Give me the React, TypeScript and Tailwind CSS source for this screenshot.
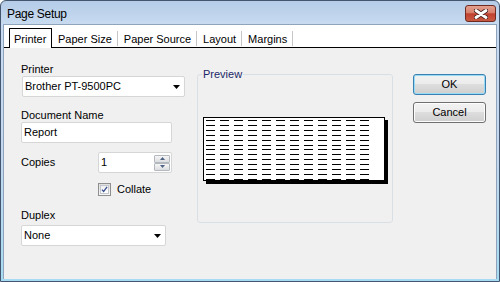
import React from "react";

const Arrow = () => (
  <svg width="7" height="4" viewBox="0 0 7 4" className="shrink-0">
    <path d="M0 0h7L3.5 4z" fill="#000" />
  </svg>
);

function ComboBox({ value, className }: { value: string; className: string }) {
  return (
    <div
      className={`h-[21px] bg-white border border-[#d6d6d6] rounded-[2px] flex items-center justify-between pl-[2px] pr-[4px] ${className}`}
    >
      <span>{value}</span>
      <Arrow />
    </div>
  );
}

function SpinArrow({ up }: { up: boolean }) {
  return (
    <div className="w-[16px] h-[8px] border border-[#b4b9c0] rounded-[1px] bg-[linear-gradient(to_bottom,#f6f6f6,#dcdde0)] flex items-center justify-center">
      <svg width="5" height="3" viewBox="0 0 5 3">
        <path d={up ? "M0 3h5L2.5 0z" : "M0 0h5L2.5 3z"} fill="#4d6284" />
      </svg>
    </div>
  );
}

function CloseButton() {
  return (
    <div className="self-start mt-[4px] w-[31px] h-[17px] rounded-[3px] border border-[#6f2a22] bg-[linear-gradient(to_bottom,#e3a08f_0%,#d7806c_45%,#c2402f_52%,#c85a42_100%)] flex items-center justify-center">
      <svg width="14" height="10" viewBox="0 0 14 10">
        <path d="M2 1.5L12 8.5M12 1.5L2 8.5" stroke="#4a2420" strokeWidth="4.6" strokeLinecap="round" />
        <path d="M2 1.5L12 8.5M12 1.5L2 8.5" stroke="#ffffff" strokeWidth="2.8" strokeLinecap="round" />
      </svg>
    </div>
  );
}

const tabs = ["Paper Size", "Paper Source", "Layout", "Margins"];

const rows = Array.from({ length: 13 });
const cols = Array.from({ length: 12 });

export default function App() {
  return (
    <div className="w-[500px] h-[282px] flex flex-col border border-[#44566f] rounded-t-[6px] overflow-hidden bg-[linear-gradient(to_bottom,#b5cce7_0px,#c8dbf0_24px,#c3d8ee_55%,#a6dcf3_100%)] font-['Liberation_Sans',Arial,sans-serif] text-[11px] leading-[13px] text-black">
      {/* Title bar */}
      <div className="h-[23px] shrink-0 flex items-center justify-between pl-[6px] pr-[3px]">
        <span className="text-[12px] leading-[14px] mt-[2px] tracking-[-0.3px]">Page Setup</span>
        <CloseButton />
      </div>

      {/* Client area */}
      <div className="flex-1 mx-[2px] mb-[2px] border-x border-t border-[#8fa3bc] bg-[#f0f0f0] flex flex-col">
        {/* Tabs */}
        <div className="h-[23px] shrink-0 bg-white border-b border-black flex items-end pl-[5px]">
          <div className="relative -mb-px h-[20px] w-[43px] bg-white border-x border-t border-black pl-[4px] pt-[4px] rounded-tl-[1px]">
            Printer
          </div>
          {tabs.map((t) => (
            <div key={t} className="h-[15px] mb-px pt-[2px] pl-[6px] pr-[5px] border-r border-[#c6c6c6]">
              {t}
            </div>
          ))}
        </div>

        {/* Body */}
        <div className="flex items-start pl-[17px]">
          {/* Left column */}
          <div className="w-[164px] pt-[15px] flex flex-col">
            <span>Printer</span>
            <ComboBox value="Brother PT-9500PC" className="ml-px w-[163px]" />

            <span className="mt-[12px]">Document Name</span>
            <div className="h-[21px] w-[151px] bg-white border border-[#d6d6d6] rounded-[2px] flex items-center pl-[2px]">
              Report
            </div>

            <div className="mt-[9px] h-[21px] flex items-center">
              <span className="w-[77px]">Copies</span>
              <div className="h-[21px] w-[74px] bg-white border border-[#d6d6d6] rounded-[2px] flex items-center justify-between pl-[2px] pr-px">
                <span>1</span>
                <div className="flex flex-col">
                  <SpinArrow up />
                  <SpinArrow up={false} />
                </div>
              </div>
            </div>

            <div className="mt-[10px] flex items-center pl-[77px] gap-[6px]">
              <div className="w-[13px] h-[13px] border border-[#8e8f8f] bg-[linear-gradient(to_bottom,#dfdfdf,#f7f7f7)] p-px">
                <div className="w-full h-full border border-[#c2c7ce] bg-[linear-gradient(to_bottom,#f0f0f0,#ffffff)] flex items-center justify-center">
                  <svg width="9" height="9" viewBox="0 0 9 9">
                    <path d="M1.2 4.6L3.4 7L7.8 1.2" stroke="#3b4f93" strokeWidth="1.7" fill="none" />
                  </svg>
                </div>
              </div>
              <span>Collate</span>
            </div>

            <span className="mt-[13px]">Duplex</span>
            <ComboBox value="None" className="mt-[3px] w-[145px]" />
          </div>

          {/* Preview group */}
          <div className="relative mt-[26px] ml-[12px] w-[196px] h-[149px] border border-[#d9e0e5] rounded-[3px]">
            <span className="absolute left-[4px] top-[-7px] px-px bg-[#f0f0f0] text-[#1b2768]">Preview</span>
            <div className="ml-[5px] mt-[42px] w-[182px] h-[64px] bg-white border border-black shadow-[3px_3px_0_#000] pl-[2px] pt-[2px] flex flex-col justify-between">
              {rows.map((_, r) => (
                <div key={r} className="flex gap-[5px]">
                  {cols.map((_, c) => (
                    <div key={c} className="w-[9px] h-px bg-black" />
                  ))}
                </div>
              ))}
            </div>
          </div>

          {/* Buttons */}
          <div className="mt-[26px] ml-[20px] flex flex-col gap-[7px]">
            <div className="w-[73px] h-[21px] rounded-[3px] border border-[#3c7fb1] shadow-[inset_0_0_0_1px_#97dbf6] bg-[linear-gradient(to_bottom,#f2f2f2_0%,#ebebeb_50%,#dddddd_50%,#cfcfcf_100%)] flex items-center justify-center">
              OK
            </div>
            <div className="w-[73px] h-[21px] rounded-[3px] border border-[#707070] shadow-[inset_0_0_0_1px_#fcfcfc] bg-[linear-gradient(to_bottom,#f2f2f2_0%,#ebebeb_50%,#dddddd_50%,#cfcfcf_100%)] flex items-center justify-center">
              Cancel
            </div>
          </div>
        </div>
      </div>
    </div>
  );
}
